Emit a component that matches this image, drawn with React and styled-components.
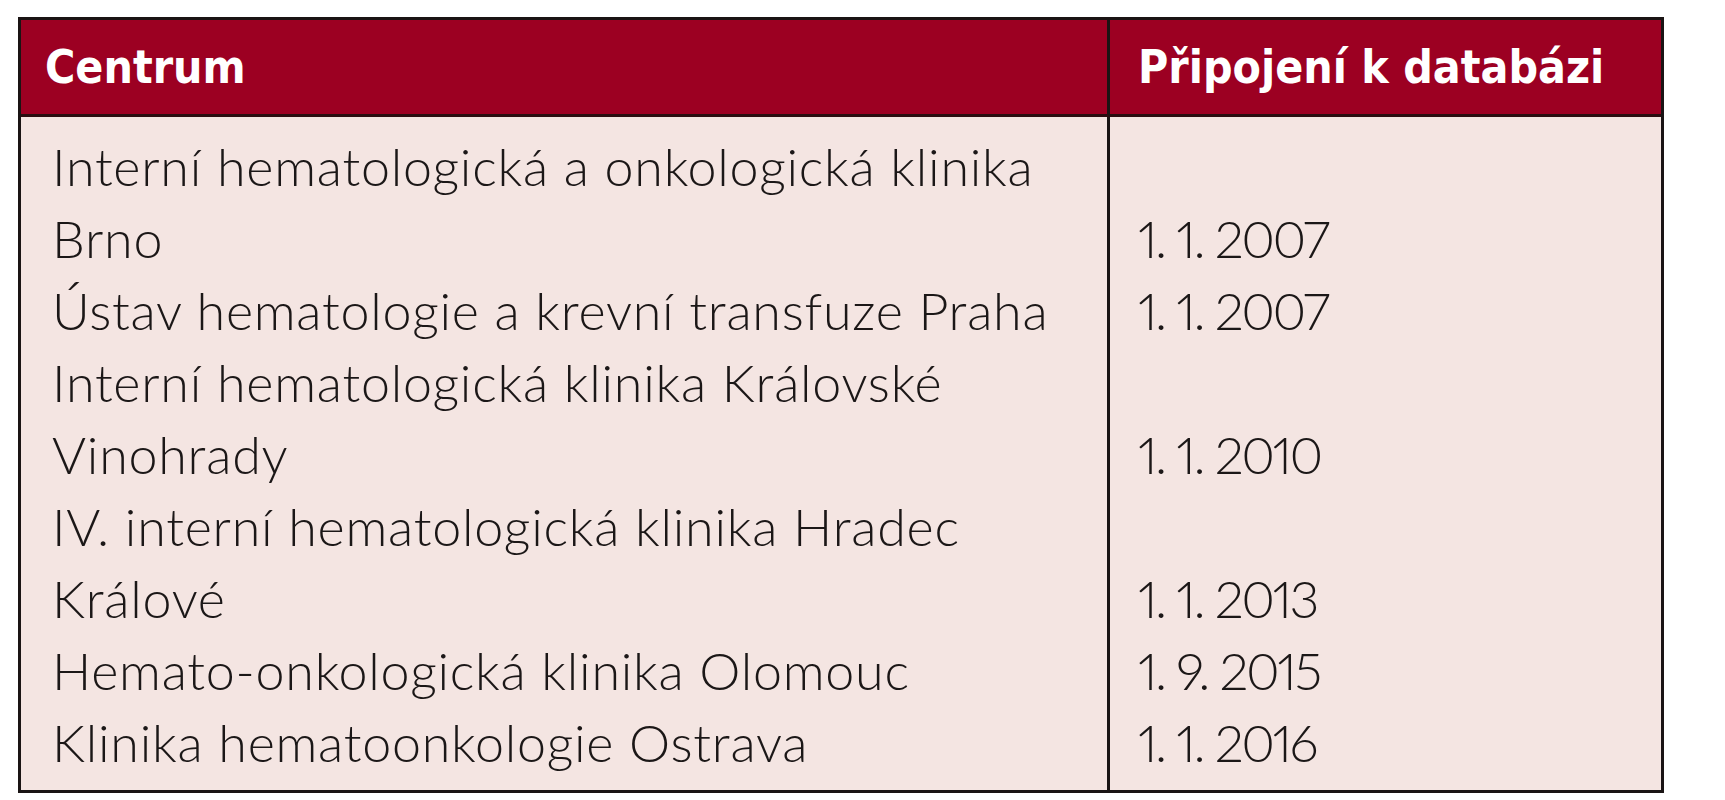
import React from 'react';
import styled, { createGlobalStyle } from 'styled-components';

const GlobalStyle = createGlobalStyle`
  html, body {
    margin: 0;
    padding: 0;
    background: #ffffff;
  }
`;

const Page = styled.div`
  padding: 17px 0 0 18px;
  width: 1725px;
  height: 800px;
  box-sizing: border-box;
`;

const Table = styled.table`
  border-collapse: separate;
  border-spacing: 0;
  box-sizing: border-box;
  width: 1646px;
  border: 3px solid #1a1414;
  background: #f4e5e2;
`;

const HeadCell = styled.th`
  background: #9c0022;
  color: #ffffff;
  text-align: left;
  font-family: 'DejaVu Sans Condensed', 'DejaVu Sans', sans-serif;
  font-stretch: condensed;
  font-weight: 700;
  font-size: 46px;
  height: 97px;
  padding: 0 0 0 ${(p) => p.$pad}px;
  width: ${(p) => p.$width}px;
  border-bottom: 3px solid #2a0d10;
  border-right: ${(p) => (p.$divider ? '3px solid #1a1414' : 'none')};
  box-sizing: border-box;
  vertical-align: middle;
`;

const Body = styled.tbody`
  font-family: Lato, 'Open Sans', sans-serif;
  font-weight: 300;
  font-size: 52px;
  line-height: 72px;
  color: #1b1717;
`;

const Cell = styled.td`
  padding: ${(p) => (p.$first ? '13px' : '0')} 0 ${(p) => (p.$last ? '12px' : '0')} ${(p) => p.$pad}px;
  border-right: ${(p) => (p.$divider ? '3px solid #1a1414' : 'none')};
  vertical-align: bottom;
  white-space: nowrap;
  letter-spacing: ${(p) => p.$spacing};
  font-variant-numeric: proportional-nums;
`;

const Line = styled.div`
  display: block;
`;

const rows = [
  { name: ['Interní hematologická a onkologická klinika', 'Brno'], date: '1. 1. 2007' },
  { name: ['Ústav hematologie a krevní transfuze Praha'], date: '1. 1. 2007' },
  { name: ['Interní hematologická klinika Královské', 'Vinohrady'], date: '1. 1. 2010' },
  { name: ['IV. interní hematologická klinika Hradec', 'Králové'], date: '1. 1. 2013' },
  { name: ['Hemato-onkologická klinika Olomouc'], date: '1. 9. 2015' },
  { name: ['Klinika hematoonkologie Ostrava'], date: '1. 1. 2016' },
];

export default function App() {
  return (
    <Page>
      <GlobalStyle />
      <Table>
        <thead>
          <tr>
            <HeadCell $width={1089} $pad={24} $divider>
              Centrum
            </HeadCell>
            <HeadCell $pad={28}>Připojení k databázi</HeadCell>
          </tr>
        </thead>
        <Body>
          {rows.map((r, i) => (
            <tr key={i}>
              <Cell
                $pad={31}
                $spacing="0.75px"
                $divider
                $first={i === 0}
                $last={i === rows.length - 1}
              >
                {r.name.map((l) => (
                  <Line key={l}>{l}</Line>
                ))}
              </Cell>
              <Cell $pad={28} $spacing="-2.5px" $first={i === 0} $last={i === rows.length - 1}>
                {r.date}
              </Cell>
            </tr>
          ))}
        </Body>
      </Table>
    </Page>
  );
}
